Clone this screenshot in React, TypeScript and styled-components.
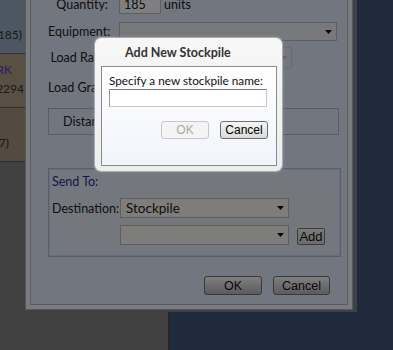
import React from "react";
import styled, { createGlobalStyle } from "styled-components";

const GlobalStyle = createGlobalStyle`
  html, body {
    margin: 0;
    padding: 0;
  }
  body {
    width: 393px;
    height: 350px;
    overflow: hidden;
    font-family: Lato, "Open Sans", sans-serif;
  }
`;

const Screen = styled.div`
  position: relative;
  display: flex;
  width: 393px;
  height: 350px;
  overflow: hidden;
  background: #3e547a;
`;

const SidePanel = styled.div`
  flex: none;
  width: 168px;
  display: flex;
  flex-direction: column;
  background: #828282;
  border-right: 2px solid #4c4c4c;
`;

const ListRow = styled.div<{ $bg: string }>`
  height: 47px;
  padding-top: 6px;
  display: flex;
  flex-direction: column;
  background: ${(p) => p.$bg};
  border-bottom: 1px solid #5e5e5e;
`;

const ListLine = styled.div<{ $end: number; $color?: string }>`
  width: ${(p) => p.$end}px;
  height: 19px;
  display: flex;
  justify-content: flex-end;
  overflow: hidden;
  white-space: nowrap;
  font-size: 12px;
  line-height: 19px;
  color: ${(p) => p.$color || "#333"};
`;

/* ---------- big window (dimmed by the backdrop) ---------- */

const Window = styled.div`
  position: absolute;
  left: 25px;
  top: -31px;
  width: 328px;
  box-sizing: border-box;
  padding: 4px;
  background: #f4f6fc;
  border: 1px solid #aaaeb4;
  box-shadow: 4px 2px 0 #768092;
`;

const WindowBody = styled.div`
  display: flex;
  flex-direction: column;
  padding: 20px 6px 9px 17px;
  background: #e4ecfe;
  border: 1px solid #b4b6be;
`;

const FieldRow = styled.div<{ $h: number; $mt: number }>`
  display: grid;
  grid-template-columns: 60px 1fr;
  column-gap: 11px;
  align-items: center;
  height: ${(p) => p.$h}px;
  margin-top: ${(p) => p.$mt}px;
`;

const Label = styled.span<{ $left?: boolean }>`
  text-align: ${(p) => (p.$left ? "left" : "right")};
  white-space: nowrap;
  font-size: 12.5px;
  color: #222;
`;

const Inline = styled.div`
  display: flex;
  align-items: center;
  gap: 3px;
  height: 100%;
`;

const TextBox = styled.div<{ $w: number }>`
  box-sizing: border-box;
  width: ${(p) => p.$w}px;
  height: 100%;
  padding: 0 4px;
  background: #fefeff;
  border: 1px solid #bec0c8;
  font-size: 12.5px;
  line-height: 17px;
  color: #222;
`;

const Unit = styled.span`
  font-size: 12.5px;
  color: #222;
`;

const Select = styled.div<{ $w: number; $disabled?: boolean; $bg?: string }>`
  position: relative;
  box-sizing: border-box;
  width: ${(p) => p.$w}px;
  height: 100%;
  padding-left: 5px;
  display: flex;
  align-items: center;
  background: ${(p) => (p.$disabled ? "#e6ecf8" : p.$bg || "#f0f2f6")};
  border: 1px solid ${(p) => (p.$disabled ? "#d4d8e0" : "#babcc4")};
  font-size: 13.5px;
  color: #1a1a1a;
`;

const ArrowWrap = styled.span<{ $disabled?: boolean }>`
  position: absolute;
  right: 4px;
  top: 50%;
  margin-top: -2px;
  display: flex;
  color: ${(p) => (p.$disabled ? "#b8bcc6" : "#111")};
`;

const Arrow = ({ disabled }: { disabled?: boolean }) => (
  <ArrowWrap $disabled={disabled}>
    <svg width="7" height="4" viewBox="0 0 7 4">
      <polygon points="0,0 7,0 3.5,4" fill="currentColor" />
    </svg>
  </ArrowWrap>
);

const GroupBar = styled.div`
  height: 27px;
  box-sizing: border-box;
  margin-top: 11px;
  margin-right: 2px;
  padding-left: 14px;
  display: flex;
  align-items: center;
  border: 1px solid #b4bac4;
  font-size: 12.5px;
  color: #222;
`;

const Fieldset = styled.div`
  height: 89px;
  box-sizing: border-box;
  margin-top: 33px;
  padding: 5px 0 0 3px;
  background: #e8f0fc;
  border: 1px solid #aebfe0;
  box-shadow: inset 0 0 0 1px #d0dcf2;
`;

const Legend = styled.div`
  height: 16px;
  font-size: 12.5px;
  line-height: 16px;
  color: #283098;
`;

const SendGrid = styled.div`
  margin-top: 8px;
  display: grid;
  grid-template-columns: 68px 169px 36px;
  grid-template-rows: 20px 20px;
  row-gap: 7px;
  align-items: center;
`;

const SmallButton = styled.button`
  align-self: end;
  width: 28px;
  height: 17px;
  margin-left: 8px;
  padding: 0;
  background: linear-gradient(#f6f6f2, #d8d8d8);
  border: 1px solid #787878;
  border-radius: 2px;
  font-family: "Liberation Sans", Arial, sans-serif;
  font-size: 13px;
  line-height: 15px;
  color: #111;
`;

const ButtonRow = styled.div`
  margin-top: 19px;
  margin-right: 11px;
  display: flex;
  justify-content: flex-end;
  gap: 11px;
  height: 19px;
`;

const WinButton = styled.button<{ $w: number }>`
  width: ${(p) => p.$w}px;
  height: 19px;
  padding: 0;
  background: linear-gradient(#fefefe, #b8b8b8);
  border: 1px solid #727272;
  border-radius: 3px;
  font-family: "Liberation Sans", Arial, sans-serif;
  font-size: 12.5px;
  color: #111;
`;

/* ---------- modal ---------- */

const Backdrop = styled.div`
  position: absolute;
  inset: 0;
  background: rgba(0, 0, 0, 0.5);
`;

const Modal = styled.div`
  position: absolute;
  left: 95px;
  top: 38px;
  width: 187px;
  height: 133px;
  box-sizing: border-box;
  padding: 0 5px 5px 6px;
  display: flex;
  flex-direction: column;
  background: linear-gradient(#f7f7f7, #ededed);
  border-radius: 6px;
  box-shadow: 0 0 0 1px rgba(190, 190, 190, 0.7), 0 0 5px rgba(200, 200, 200, 0.35);
`;

const ModalTitle = styled.div`
  height: 28px;
  padding-left: 24px;
  display: flex;
  align-items: center;
  font-size: 12.5px;
  font-weight: 700;
  color: #333;
`;

const ModalContent = styled.div`
  flex: 1;
  padding: 6px 8px 0 7px;
  background: linear-gradient(#ffffff, #f1f4fb);
  border: 1px solid #8a8a8a;
`;

const Prompt = styled.div`
  height: 16px;
  font-size: 11.75px;
  line-height: 16px;
  white-space: nowrap;
  color: #111;
`;

const NameInput = styled.input`
  display: block;
  box-sizing: border-box;
  width: 158px;
  height: 18px;
  margin: 0;
  background: #fff;
  border: 1px solid #c8c8c8;
  border-top-color: #7a7a7a;
  border-left-color: #9a9a9a;
  outline: none;
`;

const ModalButtons = styled.div`
  margin-top: 14px;
  display: flex;
  justify-content: flex-end;
  gap: 11px;
`;

const ModalButton = styled.button<{ $disabled?: boolean }>`
  width: 48px;
  height: 18px;
  padding: 0;
  border-radius: 3px;
  font-family: "Liberation Sans", Arial, sans-serif;
  font-size: 12px;
  background: ${(p) => (p.$disabled ? "#f4f4f4" : "linear-gradient(#f6f6f6, #dadada)")};
  border: 1px solid ${(p) => (p.$disabled ? "#c6c6c6" : "#6e6e6e")};
  color: ${(p) => (p.$disabled ? "#a8a8a8" : "#000")};
`;

export default function App() {
  return (
    <>
      <GlobalStyle />
      <Screen>
        <SidePanel>
          <ListRow $bg="#9aaec8">
            <ListLine $end={0} />
            <ListLine $end={22}>Stockpile North (185)</ListLine>
          </ListRow>
          <ListRow $bg="#b0a084">
            <ListLine $end={12} $color="#6b2fc9">
              PARK
            </ListLine>
            <ListLine $end={24}>Tonnes 2294</ListLine>
          </ListRow>
          <ListRow $bg="#a6967e">
            <ListLine $end={0} />
            <ListLine $end={9}>Loads (7)</ListLine>
          </ListRow>
        </SidePanel>

        <Window>
          <WindowBody>
            <FieldRow $h={19} $mt={0}>
              <Label>Quantity:</Label>
              <Inline>
                <TextBox $w={42}>185</TextBox>
                <Unit>units</Unit>
              </Inline>
            </FieldRow>
            <FieldRow $h={19} $mt={8}>
              <Label>Equipment:</Label>
              <Select $w={218}>
                <Arrow />
              </Select>
            </FieldRow>
            <FieldRow $h={21} $mt={6}>
              <Label>Load Rate:</Label>
              <Select $w={173} $disabled>
                <Arrow disabled />
              </Select>
            </FieldRow>
            <FieldRow $h={19} $mt={10}>
              <Label>Load Grade:</Label>
              <Inline>
                <TextBox $w={60} />
              </Inline>
            </FieldRow>
            <GroupBar>Distance</GroupBar>
            <Fieldset>
              <Legend>Send To:</Legend>
              <SendGrid>
                <Label $left>Destination:</Label>
                <Select $w={169} $bg="#fcfbf5">
                  Stockpile
                  <Arrow />
                </Select>
                <span />
                <span />
                <Select $w={169} $bg="#fcfbf5">
                  <Arrow />
                </Select>
                <SmallButton>Add</SmallButton>
              </SendGrid>
            </Fieldset>
            <ButtonRow>
              <WinButton $w={58}>OK</WinButton>
              <WinButton $w={57}>Cancel</WinButton>
            </ButtonRow>
          </WindowBody>
        </Window>

        <Backdrop />

        <Modal>
          <ModalTitle>Add New Stockpile</ModalTitle>
          <ModalContent>
            <Prompt>Specify a new stockpile name:</Prompt>
            <NameInput />
            <ModalButtons>
              <ModalButton $disabled>OK</ModalButton>
              <ModalButton>Cancel</ModalButton>
            </ModalButtons>
          </ModalContent>
        </Modal>
      </Screen>
    </>
  );
}
